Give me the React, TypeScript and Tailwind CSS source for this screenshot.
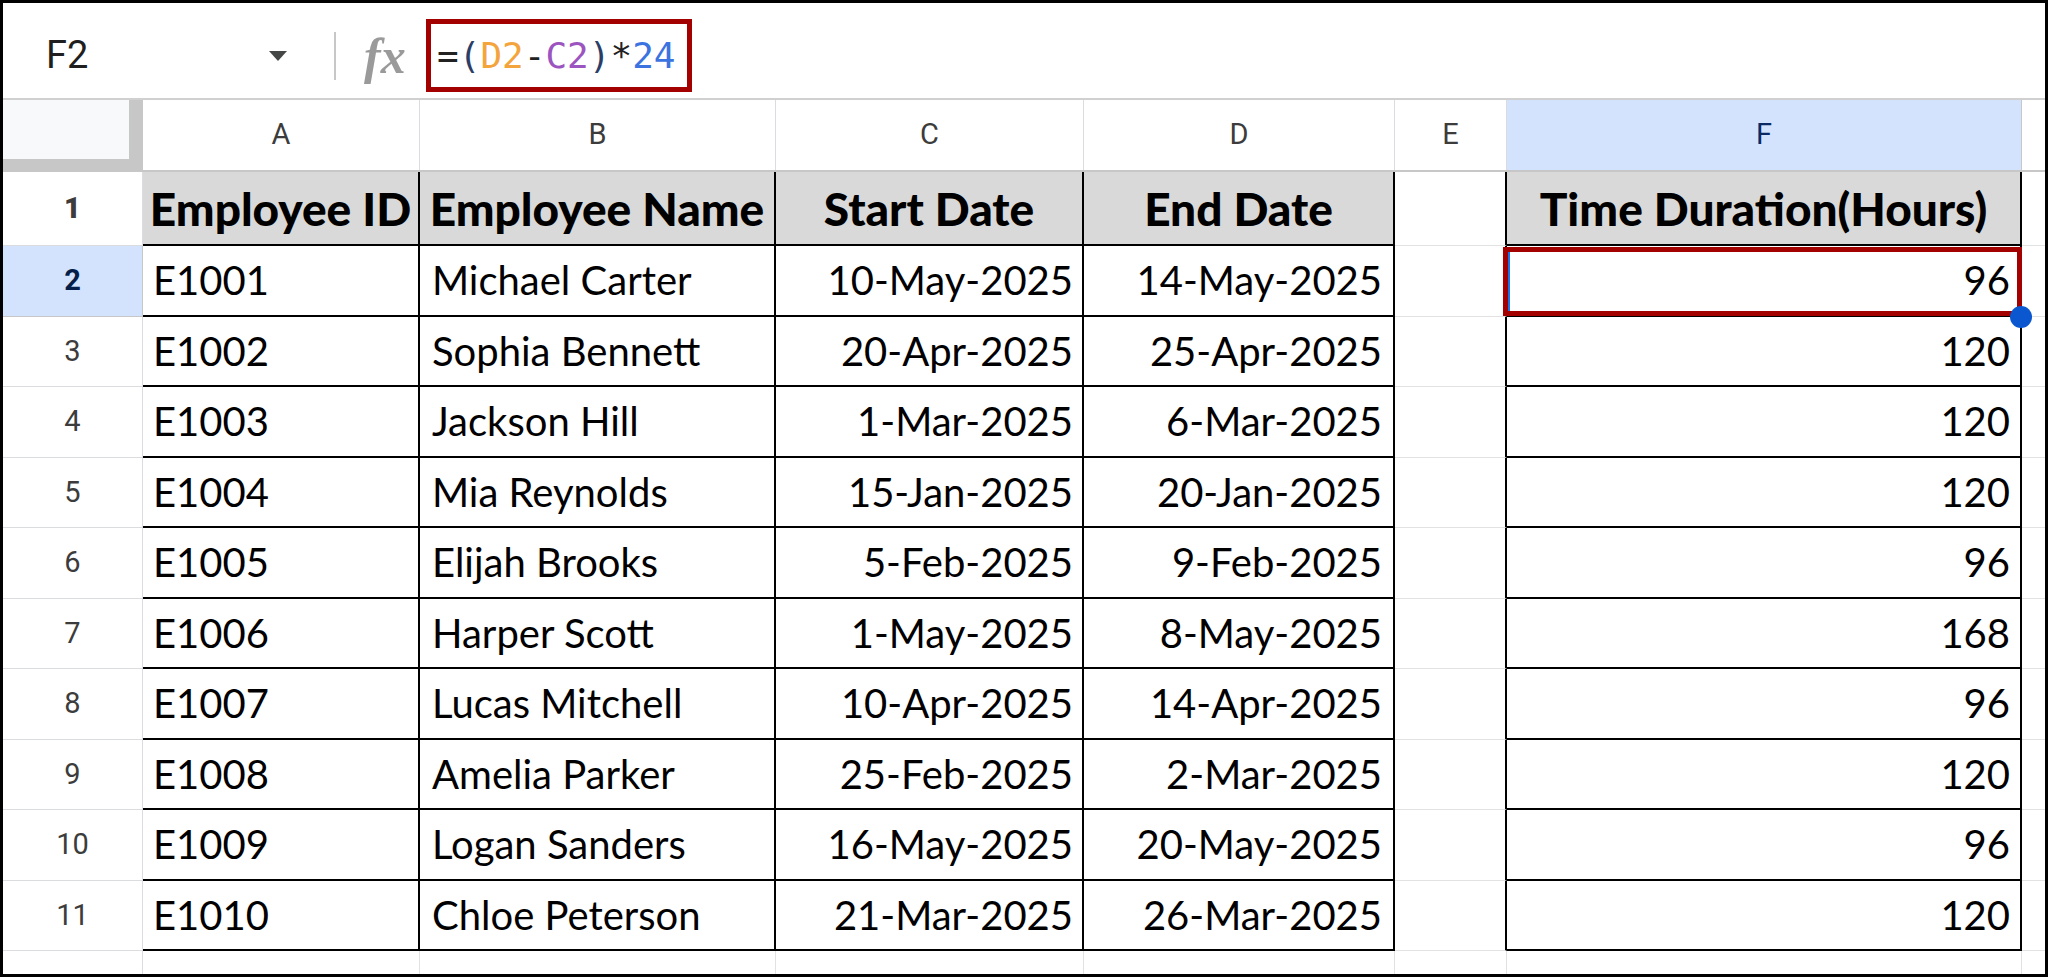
const rows = [
  ["E1001", "Michael Carter", "10-May-2025", "14-May-2025", "96"],
  ["E1002", "Sophia Bennett", "20-Apr-2025", "25-Apr-2025", "120"],
  ["E1003", "Jackson Hill", "1-Mar-2025", "6-Mar-2025", "120"],
  ["E1004", "Mia Reynolds", "15-Jan-2025", "20-Jan-2025", "120"],
  ["E1005", "Elijah Brooks", "5-Feb-2025", "9-Feb-2025", "96"],
  ["E1006", "Harper Scott", "1-May-2025", "8-May-2025", "168"],
  ["E1007", "Lucas Mitchell", "10-Apr-2025", "14-Apr-2025", "96"],
  ["E1008", "Amelia Parker", "25-Feb-2025", "2-Mar-2025", "120"],
  ["E1009", "Logan Sanders", "16-May-2025", "20-May-2025", "96"],
  ["E1010", "Chloe Peterson", "21-Mar-2025", "26-Mar-2025", "120"],
]

const cols = ["A", "B", "C", "D", "E", "F"]

function RowHead({ n, selected }: { n: number; selected?: boolean }) {
  return (
    <div
      className={
        selected
          ? "flex items-center justify-center border-r border-b border-[#c7c7c7] bg-[#d3e3fd] font-['Roboto',sans-serif] text-[29px] font-bold text-[#041e49]"
          : "flex items-center justify-center border-r border-b border-[#dadce0] bg-white font-['Roboto',sans-serif] text-[29px] text-[#3c3c3c]"
      }
    >
      {n}
    </div>
  )
}

export default function App() {
  return (
    <div className="w-[2048px] h-[977px] overflow-hidden border-[3px] border-black bg-white flex flex-col">
      {/* Formula bar */}
      <div className="h-[97px] shrink-0 flex items-center pt-[10px] border-b-2 border-[#d0d0d0] bg-white">
        <div className="w-[289px] flex items-center justify-between pl-[43px] pr-[5px]">
          <span className="font-['Roboto',sans-serif] text-[38px] text-[#1f1f1f]">F2</span>
          <svg width="18" height="10" viewBox="0 0 18 10">
            <path d="M0 0 L18 0 L9 10 Z" fill="#444746" />
          </svg>
        </div>
        <div className="ml-[42px] w-[2px] h-[48px] bg-[#c7c7c7]" />
        <span className="ml-[28px] w-[46px] font-['Liberation_Serif',serif] italic font-bold text-[50px] leading-none text-[#9a9a9a]">
          fx
        </span>
        <div className="ml-[16px] w-[266px] h-[73px] border-[5px] border-[#a30000] flex items-center pl-[6px] font-['DejaVu_Sans_Mono',monospace] text-[36px] whitespace-nowrap">
          <span className="text-[#222]">=</span>
          <span className="text-[#2c3e66]">(</span>
          <span className="text-[#f4a43c]">D2</span>
          <span className="text-[#222]">-</span>
          <span className="text-[#9c55c0]">C2</span>
          <span className="text-[#2c3e66]">)</span>
          <span className="text-[#222]">*</span>
          <span className="text-[#3b74e0]">24</span>
        </div>
      </div>

      {/* Column headers */}
      <div className="h-[72px] shrink-0 grid grid-cols-[140px_277px_356px_308px_311px_112px_515px_1fr] border-b-2 border-[#c7c7c7]">
        <div className="flex flex-col bg-[#c7c7c7]">
          <div className="h-[59px] mr-[14px] bg-[#f8f9fa]" />
        </div>
        {cols.map((c) => (
          <div
            key={c}
            className={
              c === "F"
                ? "flex items-center justify-center border-r border-[#c7c7c7] bg-[#d3e3fd] font-['Roboto',sans-serif] text-[29px] text-[#0b2a63]"
                : "flex items-center justify-center border-r border-[#dadce0] bg-white font-['Roboto',sans-serif] text-[29px] text-[#3c3c3c]"
            }
          >
            {c}
          </div>
        ))}
        <div className="bg-white" />
      </div>

      {/* Row 1 headers */}
      <div className="h-[74px] shrink-0 grid grid-cols-[140px_277px_356px_308px_311px_112px_515px_1fr] font-['Lato',sans-serif] text-[46px] font-black text-black">
        <RowHead n={1} />
        <div className="flex items-center justify-center whitespace-nowrap border-r-2 border-b-2 border-black bg-[#d9d9d9]">Employee ID</div>
        <div className="flex items-center justify-center whitespace-nowrap border-r-2 border-b-2 border-black bg-[#d9d9d9]">Employee Name</div>
        <div className="flex items-center justify-center whitespace-nowrap border-r-2 border-b-2 border-black bg-[#d9d9d9]">Start Date</div>
        <div className="flex items-center justify-center whitespace-nowrap border-r-2 border-b-2 border-black bg-[#d9d9d9]">End Date</div>
        <div className="border-r-2 border-r-black border-b border-b-[#e2e2e2] bg-white" />
        <div className="flex items-center justify-center whitespace-nowrap border-r-2 border-b-2 border-black bg-[#d9d9d9]">Time Duration(Hours)</div>
        <div className="border-b border-[#e2e2e2]" />
      </div>

      {/* Data rows */}
      {rows.map((r, i) => (
        <div
          key={r[0]}
          className="h-[70.5px] shrink-0 grid grid-cols-[140px_277px_356px_308px_311px_112px_515px_1fr] font-['Lato',sans-serif] text-[40px] text-black"
        >
          <RowHead n={i + 2} selected={i === 0} />
          <div className="flex items-center pl-[10px] whitespace-nowrap border-r-2 border-b-2 border-black">{r[0]}</div>
          <div className="flex items-center pl-[12px] whitespace-nowrap border-r-2 border-b-2 border-black">{r[1]}</div>
          <div className="flex items-center justify-end pr-[9px] whitespace-nowrap border-r-2 border-b-2 border-black">{r[2]}</div>
          <div className="flex items-center justify-end pr-[11px] whitespace-nowrap border-r-2 border-b-2 border-black">{r[3]}</div>
          <div className="border-r-2 border-r-black border-b border-b-[#e2e2e2]" />
          <div className="relative flex items-center justify-end pr-[10px] border-r-2 border-b-2 border-black">
            {r[4]}
            {i === 0 && (
              <>
                <div className="absolute -left-[4px] -right-[2px] top-[1px] -bottom-[1px] border-[5px] border-[#a30000]">
                  <div className="h-full w-[2px] bg-[#1a73e8]" />
                </div>
                <div className="absolute -right-[12px] -bottom-[13px] z-10 w-[22px] h-[22px] rounded-full bg-[#0b57d0]" />
              </>
            )}
          </div>
          <div className="border-b border-[#e2e2e2]" />
        </div>
      ))}

      {/* Row 12 (cut off) */}
      <div className="h-[70.5px] shrink-0 grid grid-cols-[140px_277px_356px_308px_311px_112px_515px_1fr]">
        <RowHead n={12} />
        <div className="border-r border-[#e2e2e2]" />
        <div className="border-r border-[#e2e2e2]" />
        <div className="border-r border-[#e2e2e2]" />
        <div className="border-r border-[#e2e2e2]" />
        <div className="border-r border-[#e2e2e2]" />
        <div className="border-r border-[#e2e2e2]" />
        <div />
      </div>
    </div>
  )
}
